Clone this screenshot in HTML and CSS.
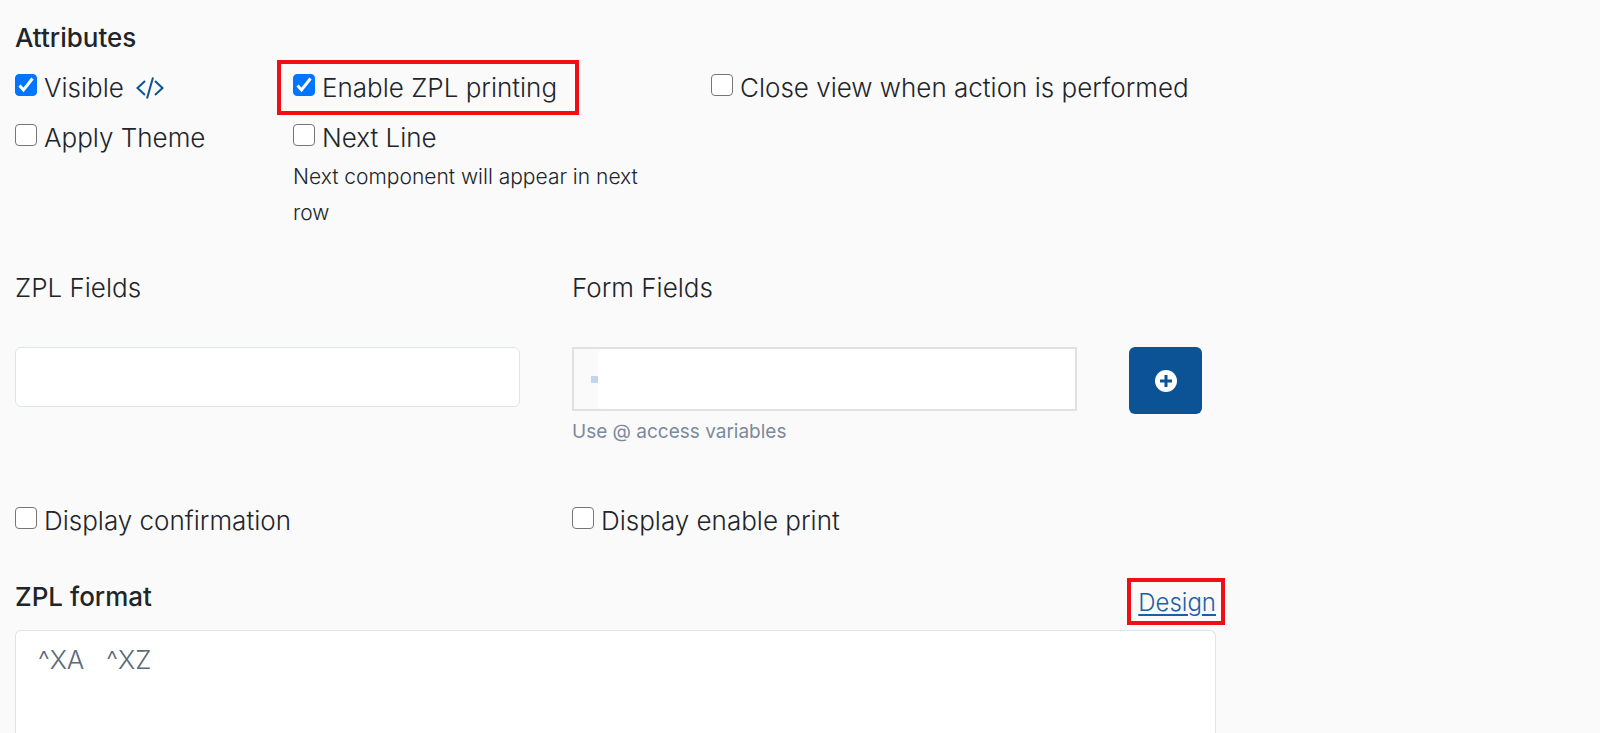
FILE: index.html
```html
<!DOCTYPE html>
<html lang="en">
<head>
    <meta charset="utf-8">
    <title>ZPL printing</title>
    <link rel="stylesheet" href="styles.css">
</head>
<body>

    <form class="settings">
        <h2 class="title">Attributes</h2>

        <div class="attributes">
            <div class="check-row">
                <label class="check"><input type="checkbox" checked>Visible</label>
                <a class="code-link" href="#" aria-label="Edit expression">
                    <svg width="28" height="22" viewBox="0 0 28 22" fill="none" stroke="#0b5394" stroke-width="2">
                        <path d="M9 4 1.500 11 9 18M19 4l7.500 7-7.500 7M17 0.500 11 21.500"/>
                    </svg>
                </a>
            </div>
            <div class="check-row">
                <label class="check marked"><input type="checkbox" checked>Enable ZPL printing</label>
            </div>
            <div class="check-row">
                <label class="check"><input type="checkbox">Close view when action is performed</label>
            </div>
            <div class="check-row">
                <label class="check"><input type="checkbox">Apply Theme</label>
            </div>
            <div>
                <label class="check"><input type="checkbox" aria-describedby="nextHint">Next Line</label>
                <p class="hint" id="nextHint">Next component will appear in next row</p>
            </div>
        </div>

        <div class="fields">
            <div>
                <label class="field-label" for="zplField">ZPL Fields</label>
                <input class="text-input" type="text" id="zplField">
            </div>
            <div>
                <label class="field-label" for="formField">Form Fields</label>
                <div class="variable-box">
                    <span class="variable-tag"></span>
                    <input class="variable-input" type="text" id="formField">
                </div>
                <p class="hint muted">Use @ access variables</p>
            </div>
            <button class="add-button" type="button" aria-label="Add field">
                <svg width="22" height="22" viewBox="0 0 22 22">
                    <circle cx="11" cy="11" r="11" fill="#fff"/>
                    <path d="M11 5v12M5 11h12" stroke="#0b5394" stroke-width="3"/>
                </svg>
            </button>
        </div>

        <div class="options">
            <label class="check"><input type="checkbox">Display confirmation</label>
            <label class="check"><input type="checkbox">Display enable print</label>
        </div>

        <div class="format-header">
            <label class="title" for="zplFormat">ZPL format</label>
            <a class="design-link marked" href="#">Design</a>
        </div>
        <textarea class="format-text" id="zplFormat">^XA   ^XZ</textarea>
    </form>

</body>
</html>
```

FILE: styles.css
```css
* {
    box-sizing: border-box;
}

body {
    margin: 0;
    background-color: #fafafa;
    color: #212529;
    font-family: Inter, "Open Sans", sans-serif;
    font-size: 26px;
    font-weight: 300;
    line-height: 42px;
}

.settings {
    display: flex;
    flex-direction: column;
    width: 76%;
    height: 100vh;
    padding: 17px 0 0 15px;
}

.title {
    margin: 0 0 8px;
    font-size: 26px;
    font-weight: 500;
}

.attributes {
    display: grid;
    grid-template-columns: 226fr 366fr 505fr;
    align-items: start;
    gap: 8px 52px;
}

.check-row {
    display: flex;
    gap: 12px;
}

.check {
    position: relative;
    display: flex;
    align-items: center;
    gap: 7px;
    white-space: nowrap;
}

.check input {
    appearance: none;
    width: 22px;
    height: 22px;
    margin: 0 0 6px;
    border: 1px solid #767676;
    border-radius: 4px;
    background-color: #fff;
}

.check input:checked {
    border-color: #0075ff;
    background: #0075ff url("data:image/svg+xml,%3Csvg xmlns='http://www.w3.org/2000/svg' viewBox='0 0 20 20'%3E%3Cpath d='M3.500 10.500l4 4.500 9-11.500' fill='none' stroke='white' stroke-width='3'/%3E%3C/svg%3E") center no-repeat;
}

.code-link {
    display: flex;
    align-items: center;
}

/* red frame around the highlighted controls */
.marked::after {
    content: "";
    position: absolute;
    inset: -7px -22px -6px -16px;
    border: 4px solid #f30d15;
    pointer-events: none;
}

.hint {
    margin: 0;
    font-size: 21px;
    line-height: 36px;
}

.muted {
    margin-top: 3px;
    color: #7b8a9a;
    font-size: 19px;
    font-weight: 400;
}

.fields {
    display: grid;
    grid-template-columns: 505fr 505fr 87fr;
    gap: 52px;
    margin-top: 36px;
}

.field-label {
    display: block;
    margin-bottom: 38px;
}

.text-input {
    display: block;
    width: 100%;
    height: 60px;
    padding: 0 22px;
    border: 1px solid #dfe4ea;
    border-radius: 6px;
    background-color: #fff;
    font: inherit;
}

.variable-box {
    display: flex;
    align-items: center;
    height: 64px;
    padding-left: 17px;
    border: 2px solid #e1e1e1;
}

.variable-tag {
    width: 7px;
    height: 7px;
    background-color: #c1d5ef;
}

.variable-input {
    flex: 1;
    min-width: 0;
    height: 60px;
    padding: 0 10px;
    border: 0;
    border-radius: 5px 0 0 5px;
    background-color: #fff;
    font: inherit;
}

.add-button {
    display: flex;
    align-items: center;
    justify-content: center;
    width: 73px;
    height: 67px;
    margin-top: 80px;
    border: 0;
    border-radius: 6px;
    background-color: #0b5394;
}

.options {
    display: grid;
    grid-template-columns: 505fr 505fr 87fr;
    gap: 52px;
    margin-top: 50px;
}

.format-header {
    display: flex;
    justify-content: space-between;
    align-items: center;
    margin: 34px 0 4px;
}

.design-link {
    position: relative;
    padding-top: 4px;
    color: #1d5fa3;
    font-size: 24px;
    text-underline-offset: 3px;
}

.design-link.marked::after {
    inset: 0 -9px -1px -11px;
}

/* takes the rest of the window, open at the bottom */
.format-text {
    flex: 1;
    width: 100%;
    padding: 8px 22px;
    border: 1px solid #dfe4ea;
    border-bottom: 0;
    border-radius: 6px 6px 0 0;
    background-color: #fff;
    color: #5b6a7b;
    font: inherit;
    resize: none;
}
```
